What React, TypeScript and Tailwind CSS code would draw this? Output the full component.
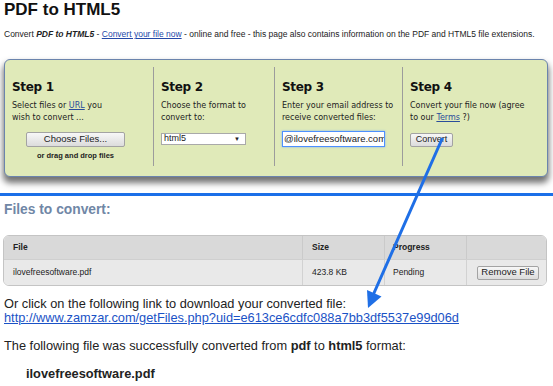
import React from 'react';

const stepFont = "font-['DejaVu_Sans',Verdana,sans-serif]";
const btn =
  "border border-[#a3a3a3] rounded-[2px] bg-gradient-to-b from-[#f7f7f7] to-[#dcdcdc] text-[#222] flex items-center justify-center font-['Liberation_Sans',Arial,sans-serif]";

function Step({ n, children, first }: { n: number; children: React.ReactNode; first?: boolean }) {
  return (
    <div className={`h-[99px] pt-[13px] ${first ? '' : 'border-l border-[#9c9c9c] pl-[7px]'} ${stepFont}`}>
      <h3 className="text-[12px] leading-[14px] font-bold tracking-[-0.3px] text-[#111]">Step {n}</h3>
      {children}
    </div>
  );
}

export default function App() {
  return (
    <div className="relative w-[553px] h-[386px] overflow-hidden bg-white text-[#222] font-['Liberation_Sans',Arial,sans-serif]">
      <div className="px-[4px]">
        <h1 className="text-[17px] leading-[20px] font-bold text-[#111]">PDF to HTML5</h1>
        <p className="mt-[9px] text-[8.5px] leading-[11px]">
          Convert <b><i>PDF to HTML5</i></b> -{' '}
          <span className="text-[#2448a8] underline">Convert your file now</span> - online and free - this page also
          contains information on the PDF and HTML5 file extensions.
        </p>

        <div className="mt-[19px] w-[544px] rounded-[6px] border border-[#6b84ad] bg-[#e0eab9] pl-[7px] pt-[7px] pb-[10px] shadow-[0_5px_6px_1px_rgba(0,0,0,0.55)]">
          <div className="grid grid-cols-[141px_121px_128px_1fr]">
            <Step n={1} first>
              <p className="mt-[6px] text-[8px] leading-[11.5px]">
                Select files or <span className="text-[#2a4d9b] underline">URL</span> you
                <br />
                wish to convert ...
              </p>
              <div className="ml-[14px] w-[99px] text-center">
                <div className={`${btn} mt-[9px] h-[15px] text-[9.5px]`}>Choose Files...</div>
                <div className="mt-[4px] text-[7.5px] leading-[9px] font-bold font-['Liberation_Sans',Arial,sans-serif]">
                  or drag and drop files
                </div>
              </div>
            </Step>
            <Step n={2}>
              <p className="mt-[6px] text-[8px] leading-[11.5px]">
                Choose the format to
                <br />
                convert to:
              </p>
              <div className="mt-[10px] flex h-[12px] w-[85px] items-center justify-between border border-[#a9a9a9] bg-white pl-[2px] pr-[5px] font-['Liberation_Sans',Arial,sans-serif] text-[9px]">
                <span>html5</span>
                <span className="text-[6px]">▼</span>
              </div>
            </Step>
            <Step n={3}>
              <p className="mt-[6px] text-[8px] leading-[11.5px]">
                Enter your email address to
                <br />
                receive converted files:
              </p>
              <div className="mt-[8px] flex h-[16px] w-[103px] items-center overflow-hidden border border-[#4d90fe] bg-white pl-[1px] font-['Liberation_Sans',Arial,sans-serif] text-[9.5px] shadow-[0_0_2px_#7fb0f5] whitespace-nowrap">
                @ilovefreesoftware.com
              </div>
            </Step>
            <Step n={4}>
              <p className="mt-[6px] text-[8px] leading-[11.5px]">
                Convert your file now (agree
                <br />
                to our <span className="text-[#2a4d9b] underline">Terms</span> ?)
              </p>
              <div className={`${btn} mt-[10px] h-[14px] w-[43px] text-[9px]`}>Convert</div>
            </Step>
          </div>
        </div>
      </div>

      <div className="mt-[16px] h-[3px] w-full bg-[#1b6fe8]" />

      <div className="px-[4px]">
        <h2 className="mt-[6px] text-[13.8px] leading-[16px] font-bold text-[#7087a6]">Files to convert:</h2>

        <div className="mt-[17px] -ml-[1px] w-[544px] overflow-hidden rounded-[6px] border border-[#c4c4c4] text-[8.5px]">
          <div className="grid h-[23px] grid-cols-[298px_82px_82px_1fr] bg-[#d9d9d9] font-bold">
            <div className="flex items-center pl-[9px]">File</div>
            <div className="flex items-center border-l border-[#cacaca] pl-[9px]">Size</div>
            <div className="flex items-center border-l border-[#cacaca] pl-[8px]">Progress</div>
            <div className="border-l border-[#cacaca]" />
          </div>
          <div className="grid h-[26px] grid-cols-[298px_82px_82px_1fr] border-t border-[#cfcfcf] bg-[#e9e9e9]">
            <div className="flex items-center pl-[9px]">ilovefreesoftware.pdf</div>
            <div className="flex items-center border-l border-[#d2d2d2] pl-[9px]">423.8 KB</div>
            <div className="flex items-center border-l border-[#d2d2d2] pl-[8px]">Pending</div>
            <div className="flex items-center border-l border-[#d2d2d2] pl-[10px]">
              <div className={`${btn} h-[14px] w-[62px] text-[9.5px]`}>Remove File</div>
            </div>
          </div>
        </div>

        <p className="mt-[11px] text-[12.8px] leading-[13.5px]">
          Or click on the following link to download your converted file:
          <br />
          <span className="text-[#1a52c6] underline">http://www.zamzar.com/getFiles.php?uid=e613ce6cdfc088a7bb3df5537e99d06d</span>
        </p>
        <p className="mt-[15px] text-[12.8px] leading-[13.5px]">
          The following file was successfully converted from <b>pdf</b> to <b>html5</b> format:
        </p>
        <p className="mt-[14px] ml-[22px] text-[12.8px] leading-[13.5px] font-bold">ilovefreesoftware.pdf</p>
      </div>

      {/* arrow drawn over the page */}
      <svg className="pointer-events-none absolute left-0 top-0" width="553" height="386">
        <line x1="442" y1="139" x2="374" y2="293" stroke="#1f6fe6" strokeWidth="3" strokeLinecap="round" />
        <polygon points="368,308 381.5,296.5 367,290" fill="#1f6fe6" />
      </svg>
    </div>
  );
}
